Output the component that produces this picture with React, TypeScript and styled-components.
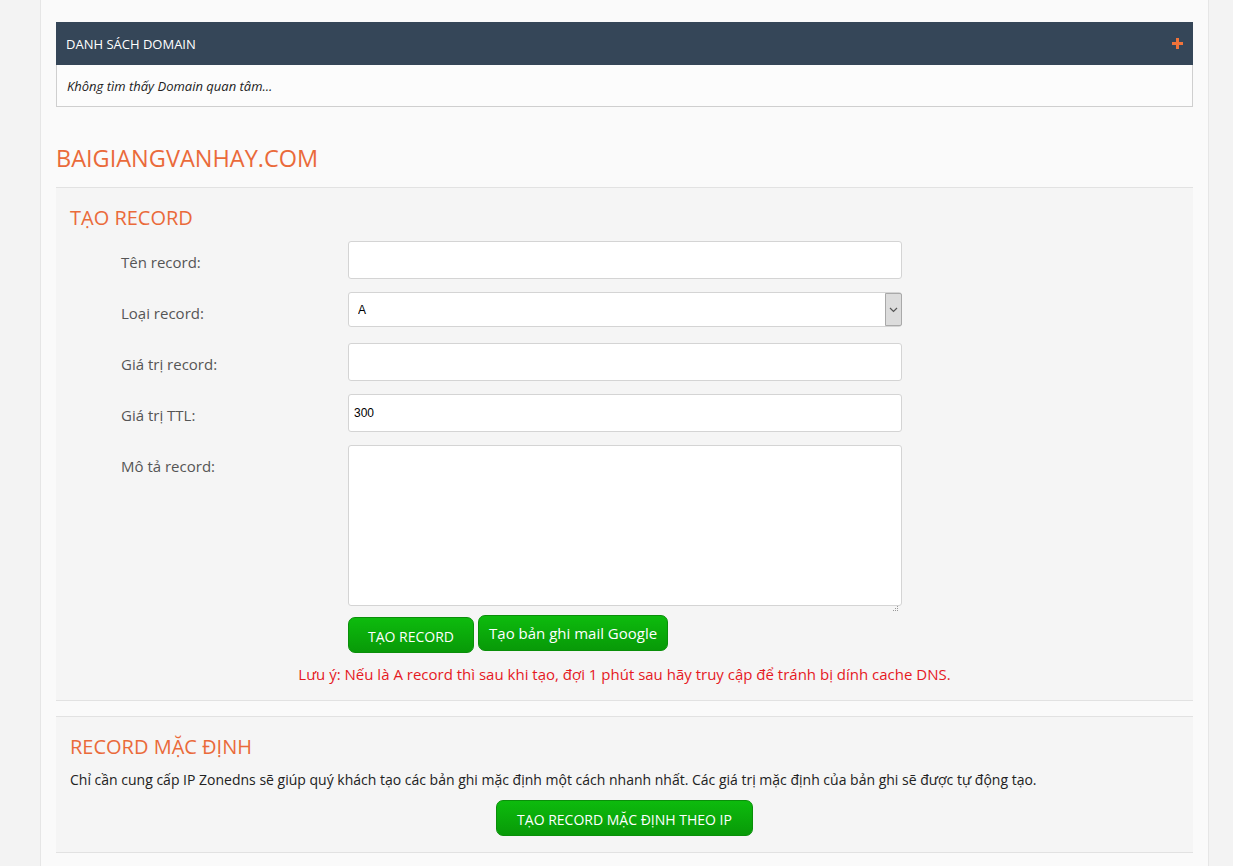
import React from 'react';
import styled, { createGlobalStyle } from 'styled-components';

const GlobalStyle = createGlobalStyle`
    html, body {
        margin: 0;
        padding: 0;
        background: #f3f3f3;
        font-family: "Open Sans", "Noto Sans", sans-serif;
    }
    * { box-sizing: border-box; }
`

const Page = styled.div`
    width: 1169px;
    margin-left: 40px;
    min-height: 866px;
    background: #fafafa;
    border-left: 1px solid #e6e6e6;
    border-right: 1px solid #e6e6e6;
    padding: 22px 15px 0 15px;
`

const Panel = styled.div`
    border: 1px solid #cfcfcf;
    border-top: none;
    background: #fcfcfc;
`

const PanelHeader = styled.div`
    height: 43px;
    background: #354658;
    color: #fff;
    font-size: 13px;
    display: flex;
    align-items: center;
    justify-content: space-between;
    padding: 0 10px;
    margin: 0 -1px;
`

const PanelBody = styled.div`
    height: 41px;
    display: flex;
    align-items: center;
    padding: 0 10px;
    font-size: 13px;
    font-style: italic;
    color: #222;
`

const DomainTitle = styled.h1`
    margin: 35px 0 0 0;
    font-size: 23.5px;
    font-weight: 400;
    color: #ea6a3a;
    line-height: 32px;
    padding-bottom: 13px;
    border-bottom: 1px solid #e2e2e2;
`

const Section = styled.section<{ $gap?: number }>`
    background: #f5f5f5;
    border-bottom: 1px solid #e2e2e2;
    padding: 14px 14px 14px 14px;
    ${p => p.$gap ? `margin-top: ${p.$gap}px; border-top: 1px solid #e2e2e2;` : ''}
`

const SectionTitle = styled.h2`
    margin: 0;
    font-size: 20px;
    font-weight: 400;
    color: #ea6a3a;
    line-height: 32px;
`

const FormGrid = styled.div`
    display: grid;
    grid-template-columns: 227px 554px;
    row-gap: 13px;
    padding-left: 51px;
    margin-top: 7px;
`

const Label = styled.label<{ $top?: boolean }>`
    font-size: 15px;
    color: #555;
    display: flex;
    align-items: ${p => p.$top ? 'flex-start' : 'center'};
    padding-top: ${p => p.$top ? '11px' : '3px'};
`

const TextInput = styled.input`
    height: 38px;
    width: 100%;
    border: 1px solid #d4d4d4;
    border-radius: 3px;
    background: #fff;
    font-family: "Liberation Sans", Arial, sans-serif;
    font-size: 12px;
    padding: 0 5px;
    color: #000;
    outline: none;
`

const SelectWrap = styled.div`
    position: relative;
    height: 38px;
`

const Select = styled.select`
    appearance: none;
    width: 100%;
    height: 35px;
    border: 1px solid #d4d4d4;
    border-radius: 3px;
    background: #fff;
    font-family: "Liberation Sans", Arial, sans-serif;
    font-size: 12px;
    padding: 0 9px;
    color: #000;
    outline: none;
`

const SelectArrow = styled.span`
    position: absolute;
    right: 0;
    top: 1px;
    width: 17px;
    height: 33px;
    background: #dcdcdc;
    border: 1px solid #a9a9a9;
    border-radius: 0 2px 2px 0;
    display: flex;
    align-items: center;
    justify-content: center;
    pointer-events: none;
`

const TextArea = styled.textarea`
    width: 100%;
    height: 161px;
    border: 1px solid #d4d4d4;
    border-radius: 3px;
    background: #fff;
    resize: none;
    outline: none;
`

const TextAreaWrap = styled.div`
    position: relative;
    height: 161px;
`

const Grip = styled.span`
    position: absolute;
    right: 3px;
    bottom: 4px;
    width: 7px;
    height: 7px;
    pointer-events: none;
`

const ButtonRow = styled.div`
    grid-column: 2;
    display: flex;
    align-items: flex-start;
    gap: 4px;
    margin-top: -2px;
`

const GreenButton = styled.button<{ $size?: number; $raise?: number; $pad?: number }>`
    height: 36px;
    padding: 0 ${p => p.$pad ?? 20}px;
    border: 1px solid #0a8f0a;
    border-radius: 7px;
    background: linear-gradient(to bottom, #0dbb0d 0%, #089a08 100%);
    color: #fff;
    font-family: "Open Sans", "Noto Sans", sans-serif;
    font-size: ${p => p.$size || 14}px;
    cursor: pointer;
    margin-top: ${p => p.$raise ? -p.$raise : 0}px;
    padding-top: ${p => p.$raise ? 0 : 2}px;
`

const Note = styled.p`
    margin: 11px 0 0 0;
    text-align: center;
    color: #e5191f;
    font-size: 15px;
    padding-bottom: 2px;
`

const Desc = styled.p`
    margin: 7px 0 0 0;
    font-size: 14px;
    color: #222;
`

const Center = styled.div`
    display: flex;
    justify-content: center;
    margin-top: 11px;
    margin-bottom: 2px;
`

export default function App() {
    return (
        <>
            <GlobalStyle />
            <Page>
                <Panel>
                    <PanelHeader>
                        <span>DANH SÁCH DOMAIN</span>
                        <svg width="11" height="11" viewBox="0 0 11 11">
                            <rect x="4" y="0" width="3" height="11" fill="#f0733a" />
                            <rect x="0" y="4" width="11" height="3" fill="#f0733a" />
                        </svg>
                    </PanelHeader>
                    <PanelBody>Không tìm thấy Domain quan tâm...</PanelBody>
                </Panel>

                <DomainTitle>BAIGIANGVANHAY.COM</DomainTitle>

                <Section>
                    <SectionTitle>TẠO RECORD</SectionTitle>
                    <FormGrid>
                        <Label>Tên record:</Label>
                        <TextInput />

                        <Label>Loại record:</Label>
                        <SelectWrap>
                            <Select defaultValue="A">
                                <option>A</option>
                                <option>AAAA</option>
                                <option>CNAME</option>
                                <option>MX</option>
                                <option>TXT</option>
                            </Select>
                            <SelectArrow>
                                <svg width="9" height="6" viewBox="0 0 9 6">
                                    <path d="M1 1 L4.5 4.5 L8 1" fill="none" stroke="#555" strokeWidth="1.2" />
                                </svg>
                            </SelectArrow>
                        </SelectWrap>

                        <Label>Giá trị record:</Label>
                        <TextInput />

                        <Label>Giá trị TTL:</Label>
                        <TextInput defaultValue="300" />

                        <Label $top>Mô tả record:</Label>
                        <TextAreaWrap>
                            <TextArea />
                            <Grip>
                                <svg width="7" height="7" viewBox="0 0 7 7">
                                    <rect x="5" y="1" width="1" height="1" fill="#999" />
                                    <rect x="3" y="3" width="1" height="1" fill="#999" />
                                    <rect x="5" y="3" width="1" height="1" fill="#999" />
                                    <rect x="1" y="5" width="1" height="1" fill="#999" />
                                    <rect x="3" y="5" width="1" height="1" fill="#999" />
                                    <rect x="5" y="5" width="1" height="1" fill="#999" />
                                </svg>
                            </Grip>
                        </TextAreaWrap>

                        <ButtonRow>
                            <GreenButton $pad={19}>TẠO RECORD</GreenButton>
                            <GreenButton $size={15} $raise={2} $pad={10}>Tạo bản ghi mail Google</GreenButton>
                        </ButtonRow>
                    </FormGrid>
                    <Note>Lưu ý: Nếu là A record thì sau khi tạo, đợi 1 phút sau hãy truy cập để tránh bị dính cache DNS.</Note>
                </Section>

                <Section $gap={15}>
                    <SectionTitle>RECORD MẶC ĐỊNH</SectionTitle>
                    <Desc>Chỉ cần cung cấp IP Zonedns sẽ giúp quý khách tạo các bản ghi mặc định một cách nhanh nhất. Các giá trị mặc định của bản ghi sẽ được tự động tạo.</Desc>
                    <Center>
                        <GreenButton>TẠO RECORD MẶC ĐỊNH THEO IP</GreenButton>
                    </Center>
                </Section>
            </Page>
        </>
    )
}
